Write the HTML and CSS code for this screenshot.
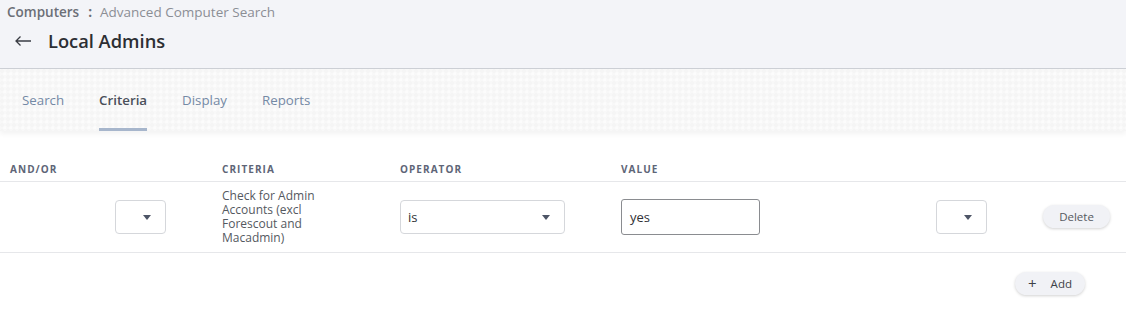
FILE: index.html
```html
<!DOCTYPE html>
<html lang="en">
<head>
<meta charset="utf-8">
<title>Local Admins</title>
<link rel="stylesheet" href="styles.css">
</head>
<body>
<header class="page-header">
  <nav class="breadcrumb"><span class="crumb-root">Computers</span><span class="crumb-sep">:</span><span class="crumb-leaf">Advanced Computer Search</span></nav>
  <div class="title-row">
    <svg class="back" width="18" height="12" viewBox="0 0 18 12"><path d="M17 6H2M6.5 1.5L2 6l4.5 4.5" fill="none" stroke="#3a3d44" stroke-width="1.3"/></svg>
    <h1 class="title">Local Admins</h1>
  </div>
</header>
<div class="tabbar">
  <a class="tab">Search</a>
  <a class="tab active">Criteria</a>
  <a class="tab">Display</a>
  <a class="tab">Reports</a>
</div>
<main class="content">
  <div class="grid head">
    <div class="th">AND/OR</div>
    <div class="th"></div>
    <div class="th">CRITERIA</div>
    <div class="th">OPERATOR</div>
    <div class="th">VALUE</div>
    <div class="th"></div>
    <div class="th"></div>
  </div>
  <div class="grid row">
    <div class="cell"></div>
    <div class="cell"><div class="select small"><span></span><i class="caret"></i></div></div>
    <div class="cell crit">Check for Admin Accounts (excl Forescout and Macadmin)</div>
    <div class="cell"><div class="select wide"><span>is</span><i class="caret"></i></div></div>
    <div class="cell"><div class="input">yes</div></div>
    <div class="cell"><div class="select small"><span></span><i class="caret"></i></div></div>
    <div class="cell"><button class="pill delete">Delete</button></div>
  </div>
  <div class="add-row">
    <button class="pill add"><span class="plus">+</span>Add</button>
  </div>
</main>
</body>
</html>
```
FILE: styles.css
```css
* { box-sizing: border-box; }
html, body { margin: 0; padding: 0; background: #fff; }
body {
  font-family: "Open Sans", "Lato", "Liberation Sans", sans-serif;
  color: #3a3d44;
  width: 1126px;
  height: 314px;
  overflow: hidden;
}
.page-header {
  background: #f3f4f8;
  height: 69px;
  border-bottom: 1px solid #cdd0d6;
  padding: 4px 0 0 7px;
}
.breadcrumb {
  font-size: 13.5px;
  line-height: 16px;
  color: #8b8e95;
  display: flex;
  align-items: center;
}
.crumb-root { color: #6b6f77; font-weight: 600; }
.crumb-sep { margin: 0 8px 0 9px; color: #6b6f77; font-weight: 700; }
.title-row {
  display: flex;
  align-items: center;
  margin-top: 9px;
  padding-left: 7px;
}
.back { margin-right: 16px; }
.title {
  margin: 0;
  font-size: 18.3px;
  line-height: 24px;
  font-weight: 600;
  color: #2c2e33;
}
.tabbar {
  height: 62px;
  display: flex;
  align-items: stretch;
  padding-left: 22px;
  background-color: #f8f8f8;
  background-image:
    radial-gradient(circle at 2px 2px, rgba(0,0,0,0.012) 1.5px, transparent 2px),
    radial-gradient(circle at 5px 5px, rgba(255,255,255,0.5) 1.5px, transparent 2px);
  background-size: 6px 6px, 6px 6px;
  box-shadow: 0 3px 5px rgba(0,0,0,0.05);
  position: relative;
}
.tab {
  font-size: 13.3px;
  color: #7489a5;
  display: flex;
  align-items: center;
  padding-top: 3px;
  border-bottom: 3px solid transparent;
  margin-right: 35px;
}
.tab.active {
  color: #4a4f5a;
  font-weight: 600;
  border-bottom-color: #a7b6cc;
}
.content { padding-top: 26px; }
.grid {
  display: grid;
  grid-template-columns: 105px 107px 178px 221px 315px 107px 1fr;
  padding-left: 10px;
}
.head { height: 25px; border-bottom: 1px solid #e6e7ea; align-items: start; padding-top: 6px; }
.th {
  font-size: 10px;
  font-weight: 700;
  letter-spacing: 1.05px;
  color: #5e6577;
  line-height: 12px;
}
.row {
  height: 71px;
  border-bottom: 1px solid #e6e7ea;
  align-items: center;
}
.cell { display: flex; align-items: center; }
.crit {
  font-size: 12px;
  line-height: 14px;
  color: #55595f;
  width: 125px;
  padding-bottom: 1px;
}
.select {
  height: 34px;
  border: 1px solid #d5d7db;
  border-radius: 4px;
  background: #fff;
  display: flex;
  align-items: center;
  justify-content: space-between;
  padding: 0 14px 0 7px;
  font-size: 13px;
  color: #2f3136;
}
.select.small { width: 51px; }
.select.wide { width: 165px; }
.caret {
  width: 0; height: 0;
  border-left: 4.5px solid transparent;
  border-right: 4.5px solid transparent;
  border-top: 5px solid #4d5566;
}
.input {
  width: 139px;
  height: 36px;
  border: 1px solid #8a8c90;
  border-radius: 3px;
  display: flex;
  align-items: center;
  padding-left: 8px;
  font-size: 13px;
  color: #2f3136;
}
.pill {
  font-family: inherit;
  border: none;
  border-radius: 12px;
  background: #f1f2f6;
  box-shadow: 0 1px 3px rgba(0,0,0,0.18);
  color: #55595f;
  font-size: 11.5px;
  height: 23px;
  display: flex;
  align-items: center;
  justify-content: center;
  padding: 0;
}
.delete { width: 67px; margin-top: -2px; }
.add-row {
  display: flex;
  justify-content: flex-end;
  padding: 19px 41px 0 0;
}
.add { width: 70px; color: #3e4248; }
.plus { font-size: 15px; margin-right: 14px; margin-top: -2px; color: #3e4248; }
```
